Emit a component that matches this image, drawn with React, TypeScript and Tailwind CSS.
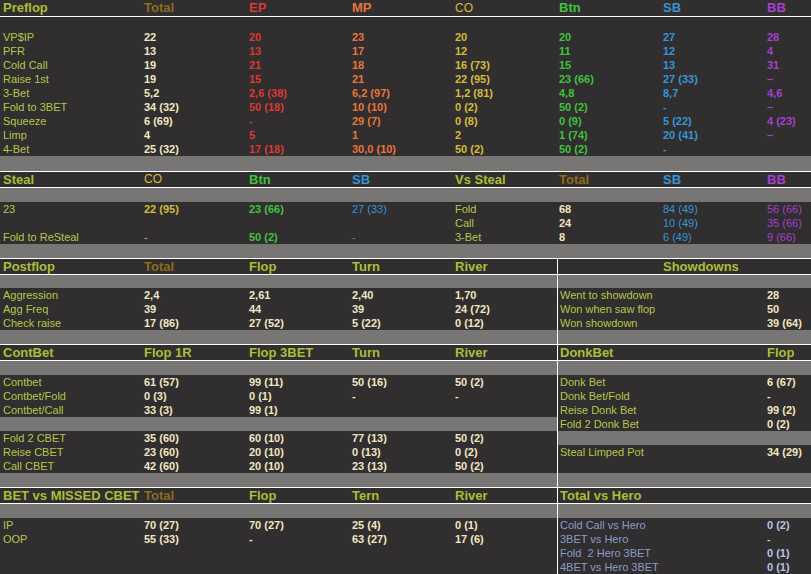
import React from 'react';

type Cell = { t: string; c: string; b?: boolean; sm?: boolean };

const C = {
  head: 'text-[#abbe36]',
  lab: 'text-[#b5c64a]',
  val: 'text-[#f1e6c2]',
  tot: 'text-[#8d6b1d]',
  ep: 'text-[#d83a35]',
  mp: 'text-[#e6773b]',
  co: 'text-[#d5bb38]',
  btn: 'text-[#40c23e]',
  sb: 'text-[#3795d5]',
  bb: 'text-[#a441cf]',
  hl: 'text-[#8d9bca]',
  hv: 'text-[#b9c3e3]',
};

// column widths
const FULL = ['w-[144px] pl-[3px]', 'w-[105px]', 'w-[103px]', 'w-[103px]', 'w-[104px]', 'w-[104px]', 'w-[104px]', 'w-[44px]'];
const LEFT = ['w-[144px] pl-[3px]', 'w-[105px]', 'w-[103px]', 'w-[103px]', 'w-[102px]'];
const RIGHT = ['w-[209px] pl-[2px]', 'w-[44px]'];

const Line = () => <div className="h-px bg-white" />;
const Gray = ({ h }: { h: string }) => <div className={`${h} bg-[#787575]`} />;

const HeadRow = ({ cells, widths, h = 'h-[15px] leading-[15px]' }: { cells: Cell[]; widths: string[]; h?: string }) => (
  <div className={`flex ${h} whitespace-nowrap`}>
    {cells.map((cell, i) => (
      <div key={i} className={`${widths[i]} shrink-0 ${cell.c} ${cell.sm ? 'text-[12px] font-normal' : 'text-[13px] font-bold'}`}>
        {cell.t}
      </div>
    ))}
  </div>
);

const DataRow = ({ cells, widths }: { cells: Cell[]; widths: string[] }) => (
  <div className="flex h-[14px] leading-[14px] text-[11px] whitespace-pre">
    {cells.map((cell, i) => (
      <div key={i} className={`${widths[i]} shrink-0 ${cell.c} ${cell.b ? 'font-bold' : 'font-normal'}`}>
        {cell.t}
      </div>
    ))}
  </div>
);

const l = (t: string): Cell => ({ t, c: C.lab });
const v = (t: string, c: string = C.val): Cell => ({ t, c, b: true });
const n = (t: string, c: string): Cell => ({ t, c });

const pos = [C.tot, C.ep, C.mp, C.co, C.btn, C.sb, C.bb];

const preflopData: [string, string[]][] = [
  ['VP$IP', ['22', '20', '23', '20', '20', '27', '28']],
  ['PFR', ['13', '13', '17', '12', '11', '12', '4']],
  ['Cold Call', ['19', '21', '18', '16 (73)', '15', '13', '31']],
  ['Raise 1st', ['19', '15', '21', '22 (95)', '23 (66)', '27 (33)', '–']],
  ['3-Bet', ['5,2', '2,6 (38)', '6,2 (97)', '1,2 (81)', '4,8', '8,7', '4,6']],
  ['Fold to 3BET', ['34 (32)', '50 (18)', '10 (10)', '0 (2)', '50 (2)', '-', '–']],
  ['Squeeze', ['6 (69)', '-', '29 (7)', '0 (8)', '0 (9)', '5 (22)', '4 (23)']],
  ['Limp', ['4', '5', '1', '2', '1 (74)', '20 (41)', '–']],
  ['4-Bet', ['25 (32)', '17 (18)', '30,0 (10)', '50 (2)', '50 (2)', '-', '']],
];

const postflopData = [
  ['Aggression', '2,4', '2,61', '2,40', '1,70'],
  ['Agg Freq', '39', '44', '39', '24 (72)'],
  ['Check raise', '17 (86)', '27 (52)', '5 (22)', '0 (12)'],
];

const cbet1 = [
  ['Contbet', '61 (57)', '99 (11)', '50 (16)', '50 (2)'],
  ['Contbet/Fold', '0 (3)', '0 (1)', '-', '-'],
  ['Contbet/Call', '33 (3)', '99 (1)', '', ''],
];

const cbet2 = [
  ['Fold 2 CBET', '35 (60)', '60 (10)', '77 (13)', '50 (2)'],
  ['Reise CBET', '23 (60)', '20 (10)', '0 (13)', '0 (2)'],
  ['Call CBET', '42 (60)', '20 (10)', '23 (13)', '50 (2)'],
];

const missed = [
  ['IP', '70 (27)', '70 (27)', '25 (4)', '0 (1)'],
  ['OOP', '55 (33)', '-', '63 (27)', '17 (6)'],
];

const leftRow = (r: string[]) => [l(r[0]), ...r.slice(1).map((x) => v(x))];

export default function App() {
  return (
    <div className="w-[811px] h-[574px] overflow-hidden bg-[#302e2e] font-['Liberation_Sans',Arial,sans-serif]">
      {/* Preflop */}
      <HeadRow
        widths={FULL}
        h="h-[16px] leading-[16px]"
        cells={[
          { t: 'Preflop', c: C.head },
          { t: 'Total', c: C.tot },
          { t: 'EP', c: C.ep },
          { t: 'MP', c: C.mp },
          { t: 'CO', c: C.co, sm: true },
          { t: 'Btn', c: C.btn },
          { t: 'SB', c: C.sb },
          { t: 'BB', c: C.bb },
        ]}
      />
      <Line />
      <div className="h-[13px]" />
      {preflopData.map(([label, vals]) => (
        <DataRow key={label} widths={FULL} cells={[l(label), ...vals.map((x, i) => v(x, pos[i] === C.tot ? C.val : pos[i]))]} />
      ))}
      <Gray h="h-[15px]" />
      <Line />

      {/* Steal / Vs Steal */}
      <HeadRow
        widths={FULL}
        cells={[
          { t: 'Steal', c: C.head },
          { t: 'CO', c: C.co, sm: true },
          { t: 'Btn', c: C.btn },
          { t: 'SB', c: C.sb },
          { t: 'Vs Steal', c: C.head },
          { t: 'Total', c: C.tot },
          { t: 'SB', c: C.sb },
          { t: 'BB', c: C.bb },
        ]}
      />
      <Line />
      <Gray h="h-[14px]" />
      <DataRow widths={FULL} cells={[l('23'), v('22 (95)', C.co), v('23 (66)', C.btn), n('27 (33)', C.sb), l('Fold'), v('68'), n('84 (49)', C.sb), n('56 (66)', C.bb)]} />
      <DataRow widths={FULL} cells={[l(''), l(''), l(''), l(''), l('Call'), v('24'), n('10 (49)', C.sb), n('35 (66)', C.bb)]} />
      <DataRow widths={FULL} cells={[l('Fold to ReSteal'), n('-', C.co), v('50 (2)', C.btn), n('-', C.sb), l('3-Bet'), v('8'), n('6 (49)', C.sb), n('9 (66)', C.bb)]} />
      <Gray h="h-[14px]" />
      <Line />

      <div className="flex">
        {/* left side */}
        <div className="w-[558px] border-r border-white">
          <HeadRow
            widths={LEFT}
            cells={[
              { t: 'Postflop', c: C.head },
              { t: 'Total', c: C.tot },
              { t: 'Flop', c: C.head },
              { t: 'Turn', c: C.head },
              { t: 'River', c: C.head },
            ]}
          />
          <Line />
          <Gray h="h-[13px]" />
          {postflopData.map((r) => (
            <DataRow key={r[0]} widths={LEFT} cells={leftRow(r)} />
          ))}
          <Gray h="h-[14px]" />
          <Line />
          <HeadRow
            widths={LEFT}
            cells={[
              { t: 'ContBet', c: C.head },
              { t: 'Flop 1R', c: C.head },
              { t: 'Flop 3BET', c: C.head },
              { t: 'Turn', c: C.head },
              { t: 'River', c: C.head },
            ]}
          />
          <Line />
          <Gray h="h-[14px]" />
          {cbet1.map((r) => (
            <DataRow key={r[0]} widths={LEFT} cells={leftRow(r)} />
          ))}
          <Gray h="h-[14px]" />
          {cbet2.map((r) => (
            <DataRow key={r[0]} widths={LEFT} cells={leftRow(r)} />
          ))}
          <Gray h="h-[14px]" />
          <Line />
          <HeadRow
            widths={LEFT}
            cells={[
              { t: 'BET vs MISSED CBET', c: C.head },
              { t: 'Total', c: C.tot },
              { t: 'Flop', c: C.head },
              { t: 'Tern', c: C.head },
              { t: 'River', c: C.head },
            ]}
          />
          <Line />
          <Gray h="h-[14px]" />
          {missed.map((r) => (
            <DataRow key={r[0]} widths={LEFT} cells={leftRow(r)} />
          ))}
          <div className="h-[28px]" />
        </div>

        {/* right side */}
        <div className="w-[253px]">
          <div className="h-[15px] leading-[15px] pl-[105px] text-[13px] font-bold text-[#abbe36]">Showdowns</div>
          <Line />
          <Gray h="h-[13px]" />
          <DataRow widths={RIGHT} cells={[l('Went to showdown'), v('28')]} />
          <DataRow widths={RIGHT} cells={[l('Won when saw flop'), v('50')]} />
          <DataRow widths={RIGHT} cells={[l('Won showdown'), v('39 (64)')]} />
          <Gray h="h-[14px]" />
          <Line />
          <HeadRow widths={RIGHT} cells={[{ t: 'DonkBet', c: C.head }, { t: 'Flop', c: C.head }]} />
          <Line />
          <Gray h="h-[14px]" />
          <DataRow widths={RIGHT} cells={[l('Donk Bet'), v('6 (67)')]} />
          <DataRow widths={RIGHT} cells={[l('Donk Bet/Fold'), v('-')]} />
          <DataRow widths={RIGHT} cells={[l('Reise Donk Bet'), v('99 (2)')]} />
          <DataRow widths={RIGHT} cells={[l('Fold 2 Donk Bet'), v('0 (2)')]} />
          <Gray h="h-[14px]" />
          <DataRow widths={RIGHT} cells={[l('Steal Limped Pot'), v('34 (29)')]} />
          <div className="h-[14px]" />
          <Gray h="h-[14px]" />
          <Line />
          <HeadRow widths={RIGHT} cells={[{ t: 'Total vs Hero', c: C.head }, { t: '', c: C.head }]} />
          <Line />
          <Gray h="h-[14px]" />
          <DataRow widths={RIGHT} cells={[n('Cold Call vs Hero', C.hl), v('0 (2)', C.hv)]} />
          <DataRow widths={RIGHT} cells={[n('3BET vs Hero', C.hl), v('-', C.hv)]} />
          <DataRow widths={RIGHT} cells={[n('Fold  2 Hero 3BET', C.hl), v('0 (1)', C.hv)]} />
          <DataRow widths={RIGHT} cells={[n('4BET vs Hero 3BET', C.hl), v('0 (1)', C.hv)]} />
        </div>
      </div>
    </div>
  );
}
